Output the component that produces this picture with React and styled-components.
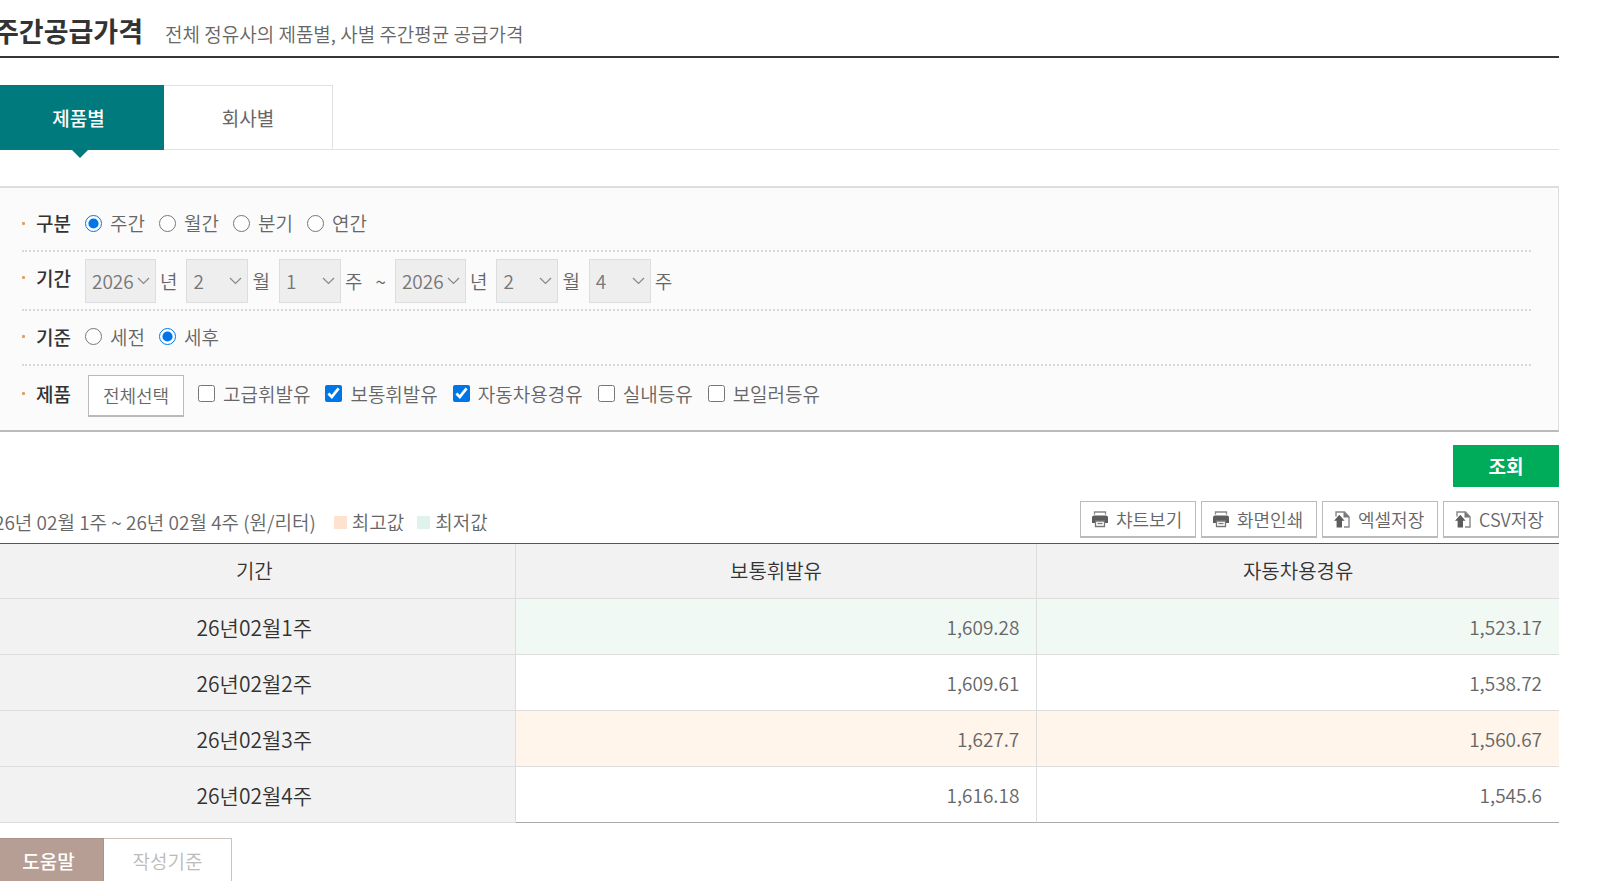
import React, { useState } from "react";
import styled, { createGlobalStyle, css } from "styled-components";

const GlobalStyle = createGlobalStyle`
  *, *::before, *::after { box-sizing: border-box; }
  html { scrollbar-width: none; }
  body {
    margin: 0;
    overflow-x: hidden;
    background: #fff;
    color: #666;
    font-family: "Noto Sans CJK KR", "Noto Sans", sans-serif;
    font-size: 19px;
    font-weight: 350;
    line-height: 28px;
  }
  button, select, input { font: inherit; color: inherit; }
  button { cursor: pointer; }
`;

const Page = styled.main`
  margin: 0 41px 0 -6px;
`;

const Header = styled.header`
  display: flex;
  align-items: baseline;
  gap: 22px;
  height: 58px;
  padding-top: 11px;
  border-bottom: 2px solid #3a3638;
`;

const Title = styled.h1`
  margin: 0;
  color: #333;
  font-size: 27px;
  font-weight: 700;
  line-height: 40px;
`;

const Subtitle = styled.p`
  margin: 0;
`;

const Tabs = styled.div`
  display: flex;
  margin-top: 27px;
  border-bottom: 1px solid #e2e2e2;
`;

const Tab = styled.button`
  position: relative;
  width: ${(p) => (p.$active ? 170 : 169)}px;
  height: 65px;
  margin-bottom: -1px;
  padding: 0;
  border: 1px solid #e2e2e2;
  border-left: 0;
  background: #fff;
  font-weight: 400;
  ${(p) =>
    p.$active &&
    css`
      border-color: #007a7c;
      background: #007a7c;
      color: #fff;
      font-weight: 500;
      &::after {
        content: "";
        position: absolute;
        top: 100%;
        left: 50%;
        margin-left: -8px;
        border: 9px solid transparent;
        border-top-color: #007a7c;
        border-bottom: 0;
      }
    `}
`;

const Filters = styled.form`
  margin-top: 36px;
`;

const FilterPanel = styled.div`
  padding: 0 27px 0 28px;
  border: solid #ddd;
  border-width: 2px 1px 2px 0;
  border-bottom-color: #bbb;
  background: #fbfbfb;
`;

const FilterRow = styled.fieldset`
  display: flex;
  align-items: center;
  min-width: 0;
  height: ${(p) => p.$height}px;
  margin: 0;
  padding: ${(p) => p.$top || 0}px 0 ${(p) => p.$bottom || 0}px;
  border: 0;
  & + & { border-top: 2px dotted #d8d8d8; }
`;

const FilterLabel = styled.span`
  display: flex;
  align-items: center;
  gap: 11px;
  width: 63px;
  padding-bottom: ${(p) => (p.$raised ? 6 : 0)}px;
  color: #333;
  font-weight: 500;
  &::before {
    content: "";
    width: 3px;
    height: 3px;
    border-radius: 1px;
    background: #e0a060;
  }
`;

const Options = styled.div`
  display: flex;
  gap: ${(p) => p.$gap}px;
`;

const OptionLabel = styled.label`
  display: flex;
  align-items: center;
  gap: 8px;
  input {
    width: 17px;
    height: 17px;
    margin: 0;
    accent-color: #0075e8;
  }
`;

const DateFields = styled.div`
  display: flex;
  align-items: center;
  gap: 9px;
`;

const DateField = styled.label`
  display: flex;
  align-items: center;
  gap: 4px;
`;

const RangeMark = styled.span`
  padding-left: 4px;
`;

const SelectBox = styled.span`
  position: relative;
  width: ${(p) => p.$width}px;
  svg {
    position: absolute;
    top: 18px;
    right: 6px;
    pointer-events: none;
  }
`;

const Select = styled.select`
  display: block;
  width: 100%;
  height: 44px;
  padding: 0 6px;
  border: 1px solid #ddd;
  border-radius: 0;
  background: #eee;
  color: #777;
  appearance: none;
`;

const SelectAll = styled.button`
  width: 96px;
  height: 42px;
  margin: 4px 14px 0 3px;
  padding: 0;
  border: 1px solid #bbb;
  border-bottom-width: 2px;
  background: #fff;
  font-size: 18px;
`;

const SearchButton = styled.button`
  display: block;
  width: 106px;
  height: 42px;
  margin: 13px 0 0 auto;
  padding: 0;
  border: 0;
  background: #00ab5a;
  color: #fff;
  font-weight: 700;
`;

const ResultBar = styled.div`
  display: flex;
  align-items: center;
  justify-content: space-between;
  margin: 14px 0 5px;
`;

const Legend = styled.div`
  display: flex;
  gap: 13px;
  padding-top: 5px;
`;

const ResultRange = styled.span`
  padding-right: 5px;
`;

const LegendItem = styled.span`
  display: flex;
  align-items: center;
  gap: 5px;
  &::before {
    content: "";
    width: 13px;
    height: 13px;
    background: ${(p) => p.$color};
  }
`;

const Tools = styled.div`
  display: flex;
  gap: 5px;
`;

const ToolButton = styled.button`
  display: flex;
  align-items: center;
  gap: 8px;
  width: 116px;
  height: 37px;
  padding: 0 11px;
  border: 1px solid #bbb;
  border-bottom-width: 2px;
  background: #fff;
  font-size: 18px;
  white-space: nowrap;
  svg { flex: none; }
`;

const PriceTable = styled.table`
  width: 100%;
  border-collapse: separate;
  border-spacing: 0;
  border-top: 1px solid #555;
  table-layout: fixed;
`;

const HeadCell = styled.th`
  height: ${(p) => (p.scope === "col" ? 55 : 56)}px;
  padding: 0;
  border-right: 1px solid #ddd;
  border-bottom: 1px solid #ddd;
  background: #f2f2f2;
  color: #333;
  font-size: ${(p) => (p.scope === "col" ? 20 : 21)}px;
  font-weight: 350;
  &:last-child { border-right: 0; }
`;

const tones = { low: "#f1f9f4", high: "#fff5ea", none: "#fff" };

const PriceCell = styled.td`
  padding: 0 17px 0 0;
  border-right: 1px solid #ddd;
  border-bottom: 1px solid #ddd;
  background: ${(p) => tones[p.$tone]};
  text-align: right;
  &:last-child { border-right: 0; }
  tr:last-child > & { border-bottom-color: #aaa; }
`;

const HelpTabs = styled.div`
  display: flex;
  margin-top: 15px;
`;

const HelpTab = styled.button`
  width: ${(p) => (p.$active ? 110 : 128)}px;
  height: 46px;
  padding: 0;
  border: 1px solid #ccc3bc;
  border-left: 0;
  background: #fff;
  color: #bbb;
  ${(p) =>
    p.$active &&
    css`
      border-color: #a8928a;
      background: #b69e95;
      color: #fff;
      font-weight: 500;
    `}
`;

const Chevron = () => (
  <svg width="13" height="8" viewBox="0 0 13 8" fill="none" stroke="#888" strokeWidth="1.2" aria-hidden="true">
    <path d="M1 1l5.5 5.5L12 1" />
  </svg>
);

const PrinterIcon = () => (
  <svg width="16" height="17" viewBox="0 0 16 17" aria-hidden="true">
    <path d="M2.5 3.500V1h11v2.500" fill="none" stroke="#888" strokeWidth="1.3" />
    <path d="M2 4.500h12a2 2 0 0 1 2 2V12H0V6.500a2 2 0 0 1 2-2z" fill="#5c5c5c" />
    <path d="M3.500 10h9v5.500h-9z" fill="#fff" stroke="#777" strokeWidth="1.3" />
    <path d="M5.500 12.500h5" stroke="#777" strokeWidth="1.3" />
  </svg>
);

const ExportIcon = () => (
  <svg width="16" height="17" viewBox="0 0 16 17" aria-hidden="true">
    <path d="M2 5.500V1h8.500l4.500 4.700V16h-5" fill="none" stroke="#888" strokeWidth="1.4" />
    <path d="M9.500 .5l6 6h-6z" fill="#777" />
    <path d="M5.300 3.800l5.300 6H8V16.500H2.600V9.800H0z" fill="#5c5c5c" />
  </svg>
);

const periods = ["주간", "월간", "분기", "연간"];
const taxes = ["세전", "세후"];
const products = ["고급휘발유", "보통휘발유", "자동차용경유", "실내등유", "보일러등유"];

const dateFields = [
  ["start-year", "2026", "년", 71],
  ["start-month", "2", "월", 62],
  ["start-week", "1", "주", 62],
  ["end-year", "2026", "년", 71],
  ["end-month", "2", "월", 62],
  ["end-week", "4", "주", 62],
];

const rows = [
  ["26년02월1주", "1,609.28", "1,523.17", "low"],
  ["26년02월2주", "1,609.61", "1,538.72", "none"],
  ["26년02월3주", "1,627.7", "1,560.67", "high"],
  ["26년02월4주", "1,616.18", "1,545.6", "none"],
];

const tools = [
  ["챠트보기", PrinterIcon],
  ["화면인쇄", PrinterIcon],
  ["엑셀저장", ExportIcon],
  ["CSV저장", ExportIcon],
];

function DateSelect({ field: [name, value, unit, width] }) {
  return (
    <DateField>
      <SelectBox $width={width}>
        <Select name={name} defaultValue={value} aria-label={unit}>
          <option>{value}</option>
        </Select>
        <Chevron />
      </SelectBox>
      {unit}
    </DateField>
  );
}

function RadioGroup({ name, items, value, onChange }) {
  return (
    <Options $gap={14}>
      {items.map((item) => (
        <OptionLabel key={item}>
          <input type="radio" name={name} checked={value === item} onChange={() => onChange(item)} />
          {item}
        </OptionLabel>
      ))}
    </Options>
  );
}

export default function App() {
  const [period, setPeriod] = useState("주간");
  const [tax, setTax] = useState("세후");
  const [selected, setSelected] = useState(["보통휘발유", "자동차용경유"]);
  const toggle = (item) =>
    setSelected((list) => (list.includes(item) ? list.filter((p) => p !== item) : [...list, item]));

  return (
    <>
      <GlobalStyle />
      <Page>
        <Header>
          <Title>주간공급가격</Title>
          <Subtitle>전체 정유사의 제품별, 사별 주간평균 공급가격</Subtitle>
        </Header>

        <Tabs>
          <Tab type="button" $active>제품별</Tab>
          <Tab type="button">회사별</Tab>
        </Tabs>

        <Filters onSubmit={(e) => e.preventDefault()}>
          <FilterPanel>
            <FilterRow $height={62} $top={8} aria-label="구분">
              <FilterLabel>구분</FilterLabel>
              <RadioGroup name="period" items={periods} value={period} onChange={setPeriod} />
            </FilterRow>
            <FilterRow $height={59} aria-label="기간">
              <FilterLabel $raised>기간</FilterLabel>
              <DateFields>
                {dateFields.slice(0, 3).map((f) => <DateSelect key={f[0]} field={f} />)}
                <RangeMark>~</RangeMark>
                {dateFields.slice(3).map((f) => <DateSelect key={f[0]} field={f} />)}
              </DateFields>
            </FilterRow>
            <FilterRow $height={55} $bottom={2} aria-label="기준">
              <FilterLabel>기준</FilterLabel>
              <RadioGroup name="tax" items={taxes} value={tax} onChange={setTax} />
            </FilterRow>
            <FilterRow $height={66} $bottom={9} aria-label="제품">
              <FilterLabel>제품</FilterLabel>
              <SelectAll type="button" onClick={() => setSelected(products)}>전체선택</SelectAll>
              <Options $gap={15}>
                {products.map((item) => (
                  <OptionLabel key={item}>
                    <input type="checkbox" checked={selected.includes(item)} onChange={() => toggle(item)} />
                    {item}
                  </OptionLabel>
                ))}
              </Options>
            </FilterRow>
          </FilterPanel>
          <SearchButton type="submit">조회</SearchButton>
        </Filters>

        <ResultBar>
          <Legend>
            <ResultRange>26년 02월 1주 ~ 26년 02월 4주 (원/리터)</ResultRange>
            <LegendItem $color="#fde3cf">최고값</LegendItem>
            <LegendItem $color="#e0f2ec">최저값</LegendItem>
          </Legend>
          <Tools>
            {tools.map(([label, Icon]) => (
              <ToolButton type="button" key={label}>
                <Icon />
                {label}
              </ToolButton>
            ))}
          </Tools>
        </ResultBar>

        <PriceTable>
          <thead>
            <tr>
              <HeadCell scope="col">기간</HeadCell>
              <HeadCell scope="col">보통휘발유</HeadCell>
              <HeadCell scope="col">자동차용경유</HeadCell>
            </tr>
          </thead>
          <tbody>
            {rows.map(([week, gasoline, diesel, tone]) => (
              <tr key={week}>
                <HeadCell scope="row">{week}</HeadCell>
                <PriceCell $tone={tone}>{gasoline}</PriceCell>
                <PriceCell $tone={tone}>{diesel}</PriceCell>
              </tr>
            ))}
          </tbody>
        </PriceTable>

        <HelpTabs>
          <HelpTab type="button" $active>도움말</HelpTab>
          <HelpTab type="button">작성기준</HelpTab>
        </HelpTabs>
      </Page>
    </>
  );
}
